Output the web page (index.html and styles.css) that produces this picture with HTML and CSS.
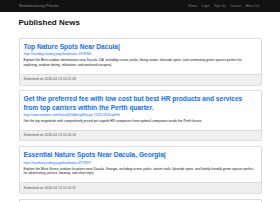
FILE: index.html
```html
<!DOCTYPE html>
<html lang="en">
<head>
<meta charset="utf-8">
<title>Published News</title>
<link rel="stylesheet" href="styles.css">
</head>
<body>
<nav class="navbar">
  <div class="wrap nav-inner">
    <a class="brand" href="#">Bookmarking Presto</a>
    <ul class="nav-links">
      <li><a href="#">Home</a></li>
      <li><a href="#">Login</a></li>
      <li><a href="#">Sign Up</a></li>
      <li><a href="#">Contact</a></li>
      <li><a href="#">About Us</a></li>
    </ul>
  </div>
</nav>
<main class="wrap">
  <h1 class="page-title">Published News</h1>

  <article class="card">
    <div class="card-body">
      <h2 class="card-title"><a href="#">Top Nature Spots Near Dacula|</a></h2>
      <a class="card-url" href="#">https://haurtbkyo.landing.page/bookmarks-49793946</a>
      <p class="card-text">Explore the Best outdoor destinations near Dacula, GA, including scenic parks, hiking routes, lakeside spots, and community green spaces perfect for exploring, outdoor dining, relaxation, and weekend escapes|</p>
    </div>
    <div class="card-footer">Submitted on 2026-04-13 14:21:03</div>
  </article>

  <article class="card">
    <div class="card-body">
      <h2 class="card-title"><a href="#">Get the preferred fee with low cost but best HR products and services from top carriers within the Perth quarter.</a></h2>
      <a class="card-url" href="#">https://www.mediafire.com/file/entlj5jl/3d6ezyd6hkcqof-72243-28146.pdf/file</a>
      <p class="card-text">Get the top magnitude with competitively priced yet superb HR companies from optimal companies inside the Perth house.</p>
    </div>
    <div class="card-footer">Submitted on 2026-04-13 14:20:54</div>
  </article>

  <article class="card">
    <div class="card-body">
      <h2 class="card-title"><a href="#">Essential Nature Spots Near Dacula, Georgia|</a></h2>
      <a class="card-url" href="#">https://haturbsoy.landing.page/bookmarks-49773879</a>
      <p class="card-text">Explore the Most Scenic outdoor locations near Dacula, Georgia, including scenic parks, nature trails, lakeside spots, and family-friendly green spaces perfect for adventuring, picnics, boating, and short trips|</p>
    </div>
    <div class="card-footer">Submitted on 2026-04-13 14:20:32</div>
  </article>

  <article class="card">
    <div class="card-body">
      <h2 class="card-title"><a href="#">Affordable HR Services and Payroll Support in Perth</a></h2>
      <a class="card-url" href="#">https://www.mediafire.com/file/hr-services-perth/file</a>
      <p class="card-text">Find reliable HR support for small businesses across the Perth region.</p>
    </div>
    <div class="card-footer">Submitted on 2026-04-13 14:20:11</div>
  </article>
</main>
</body>
</html>
```
FILE: styles.css
```css
html, body {
  margin: 0;
  padding: 0;
  background: #ffffff;
}
body {
  font-family: "Liberation Sans", Arial, sans-serif;
  font-size: 3.3px;
  line-height: 1.5;
  color: #212529;
}
a {
  text-decoration: none;
}
.wrap {
  width: 243px;
  margin: 0 auto;
}
.navbar {
  background: #111111;
  height: 12px;
  display: flex;
  align-items: center;
}
.nav-inner {
  display: flex;
  align-items: center;
  justify-content: space-between;
}
.brand {
  color: #858585;
  font-size: 4.4px;
  line-height: 1;
  padding-left: 0.5px;
}
.nav-links {
  list-style: none;
  margin: 0;
  padding: 0;
  display: flex;
}
.nav-links a {
  display: block;
  color: #7a7a7a;
  font-size: 3.3px;
  padding: 0 2.2px;
}
.page-title {
  font-size: 8px;
  font-weight: bold;
  line-height: 1.2;
  margin: 6px 0 10.4px;
  color: #111;
}
.card {
  border: 1px solid #dcdcdc;
  border-radius: 1px;
  margin-bottom: 4.8px;
  overflow: hidden;
}
.card-body {
  padding: 4px 4px 4px;
}
.card-title {
  font-size: 6.6px;
  font-weight: bold;
  line-height: 1.25;
  margin: 0 0 1.2px;
}
.card-title a {
  color: #0d6efd;
}
.card-url {
  display: block;
  color: #0d6efd;
  font-size: 2.9px;
  line-height: 4.4px;
  margin-bottom: 1.6px;
}
.card-text {
  margin: 0 0 2px;
  font-size: 3.3px;
  line-height: 4.8px;
  color: #111;
}
.card-footer {
  background: #efefef;
  border-top: 1px solid #dcdcdc;
  padding: 2.4px 4px;
  font-size: 3.4px;
  line-height: 4.8px;
  color: #555;
}
```
